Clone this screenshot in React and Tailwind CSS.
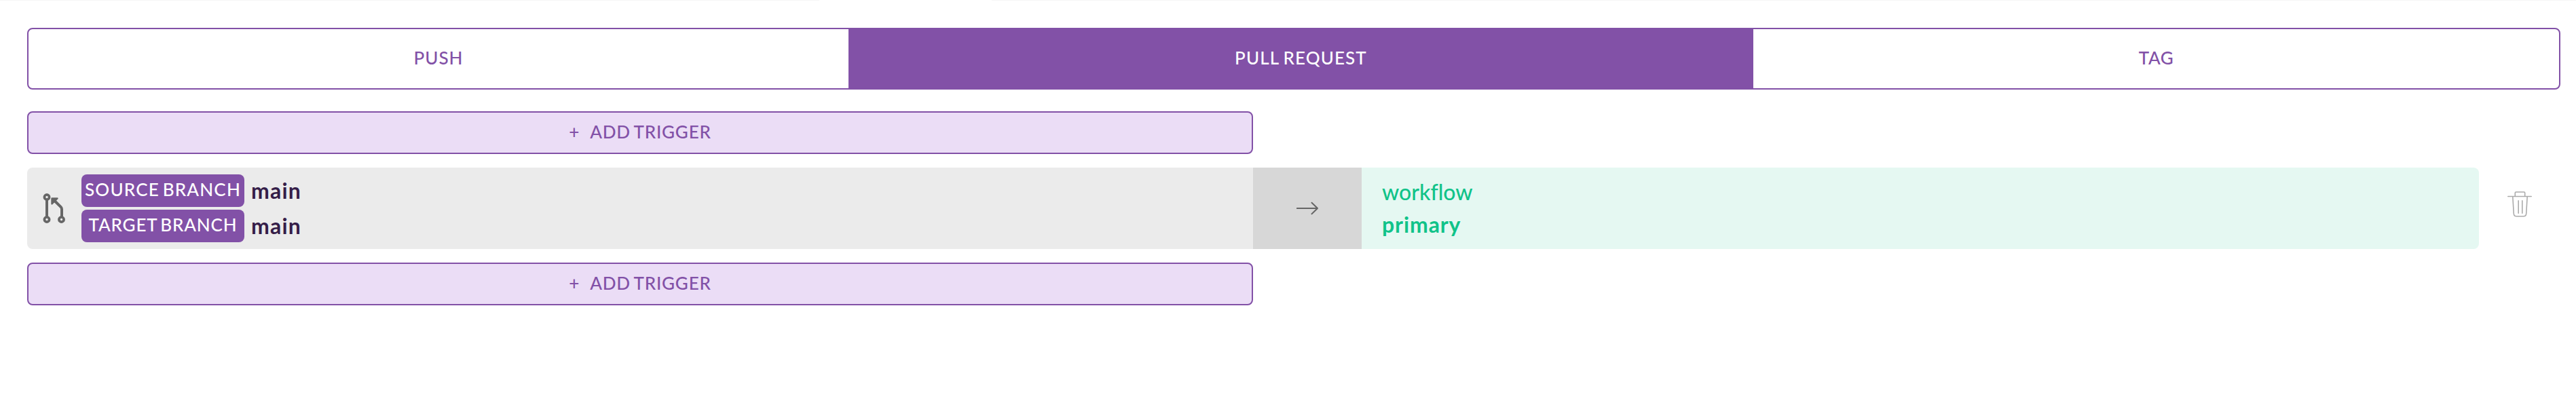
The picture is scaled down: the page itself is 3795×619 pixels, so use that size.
function GitPullRequestIcon() {
  return (
    <svg className="block h-[46px] w-[34px]" viewBox="0 0 34 46" fill="none" stroke="#666666">
      <circle cx="6" cy="6.5" r="3.6" strokeWidth="3.7" />
      <circle cx="6" cy="39.5" r="3.6" strokeWidth="3.7" />
      <circle cx="27.5" cy="39.5" r="3.6" strokeWidth="3.7" />
      <path d="M6 10V36M28 36V24.5Q28 22.5 26.7 21L17 11.5" strokeWidth="4" />
      <path d="M13.5 8.5H21.5L13.5 16.5Z" fill="#666666" strokeWidth="2.4" strokeLinejoin="round" />
    </svg>
  );
}

function ArrowIcon() {
  return (
    <svg className="block h-5 w-8" viewBox="0 0 32 20" fill="none" stroke="#666666" strokeWidth="2" strokeLinecap="round" strokeLinejoin="round">
      <path d="M0.8 10H31M22.5 1.7L31 10L22.5 18.3" />
    </svg>
  );
}

function TrashIcon() {
  return (
    <svg className="block h-[38px] w-9" viewBox="0 0 36 38" fill="none" stroke="#ababab" strokeWidth="1.6" strokeLinecap="round" strokeLinejoin="round">
      <path d="M0.8 7.5H35.2M11.3 7V2.3Q11.3 1 12.6 1H24.4Q25.7 1 25.7 2.3V7" />
      <path d="M7.8 8L9.3 33Q9.6 36.8 13.2 36.8H23.8Q27.4 36.8 27.7 33L29.2 8M16.2 13.7V32.3M21.8 13.7V32.3" />
    </svg>
  );
}

function AddTrigger() {
  return (
    <button className="flex h-[63px] w-[1806px] items-center justify-center rounded-lg border-2 border-[#8251a7] bg-[#ebddf6] pb-[2px] text-[26px] font-medium tracking-[0.8px] text-[#8251a7] [word-spacing:-2px]">
      <span className="mr-[15px]">+</span>
      <span>ADD TRIGGER</span>
    </button>
  );
}

function Branch({ label, value, tracking }) {
  return (
    <div className="flex h-12 items-center">
      <span className={`flex h-12 w-60 items-center justify-center rounded-lg bg-[#8251a7] pb-[3px] text-[26px] font-medium whitespace-nowrap text-white [word-spacing:-3px] ${tracking}`}>{label}</span>
      <span className="ml-[10px] text-[32px] leading-none font-bold tracking-[1.2px] text-[#351d48]">{value}</span>
    </div>
  );
}

export default function App() {
  return (
    <div className="h-[619px] w-[3795px] overflow-hidden bg-white font-['Lato','Liberation_Sans',sans-serif]">
      <div className="flex h-px justify-between">
        <div className="w-[1207px] bg-[#f6f6f6]" />
        <div className="w-[2334px] bg-[#f6f6f6]" />
      </div>
      <main className="px-10 pt-10">
        <nav className="flex h-[91px] w-[3732px] overflow-hidden rounded-lg border-2 border-[#8251a7] text-[26px] font-medium text-[#8251a7]">
          <button className="w-[1208px] pb-[2px] tracking-[1px]">PUSH</button>
          <button className="w-[1333px] bg-[#8251a7] pb-[2px] tracking-[1.1px] text-white [word-spacing:-1.5px]">PULL REQUEST</button>
          <button className="flex-1 pb-[2px] tracking-[0.6px]">TAG</button>
        </nav>
        <div className="mt-8"><AddTrigger /></div>
        <div className="my-5 flex h-[120px] items-center">
          <div className="flex h-[120px] w-[3612px] overflow-hidden rounded-lg">
            <div className="flex w-[1806px] items-center bg-[#ebebeb]">
              <div className="ml-[23px] w-[57px]"><GitPullRequestIcon /></div>
              <div className="flex flex-col gap-1">
                <Branch label="SOURCE BRANCH" value="main" tracking="tracking-[1.2px]" />
                <Branch label="TARGET BRANCH" value="main" tracking="tracking-[0.87px]" />
              </div>
            </div>
            <div className="flex w-40 items-center justify-center bg-[#d7d7d7]"><ArrowIcon /></div>
            <div className="flex flex-1 flex-col justify-center bg-[#e5f8f2] pl-[30px] text-[32px] leading-[48px] text-[#10c389]">
              <span className="font-medium [font-variant-ligatures:none]">workflow</span>
              <span className="font-bold tracking-[0.9px]">primary</span>
            </div>
          </div>
          <div className="-mt-3 ml-[42px]"><TrashIcon /></div>
        </div>
        <AddTrigger />
      </main>
    </div>
  );
}
